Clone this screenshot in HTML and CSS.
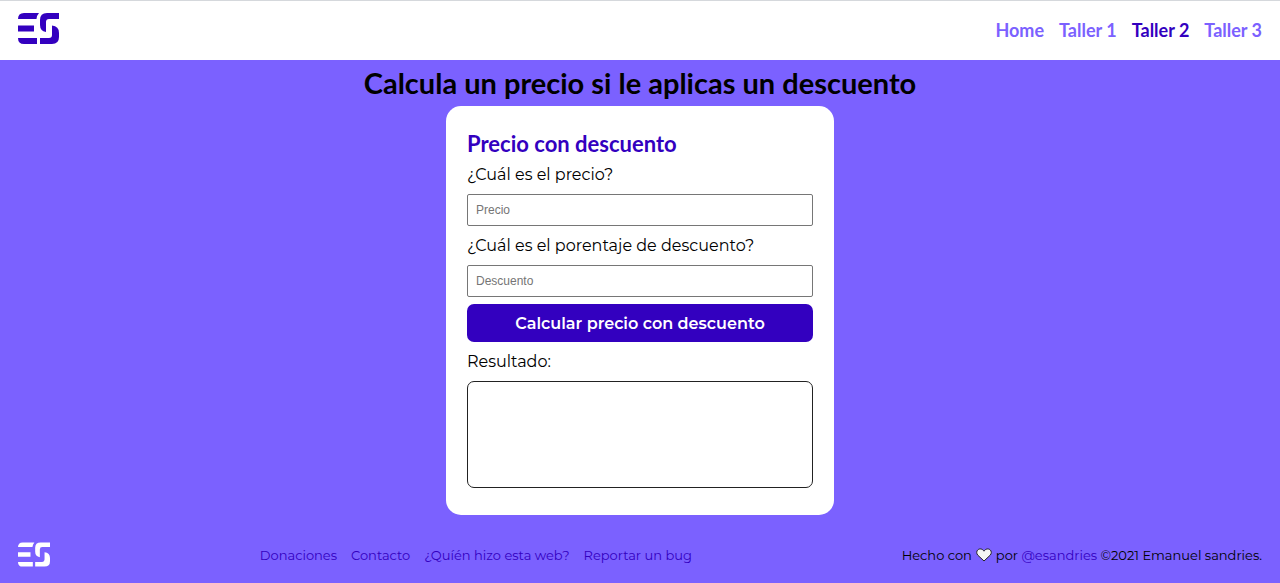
FILE: index.html
```
<!DOCTYPE html>
<html lang="es">
<head>
<meta charset="utf-8">
<meta name="viewport" content="width=device-width, initial-scale=1">
<title>Precio con descuento</title>
<link rel="stylesheet" href="styles.css">
</head>
<body>
<header class="header">
  <a class="logo-link" href="#" aria-label="Inicio">
    <svg class="logo" viewBox="0 0 41 31" aria-hidden="true">
      <path d="M6 0H21Q19 2 18.500 6H0Q0 0 6 0ZM0 12.500H16V18.500H0ZM0 25H19V31H6Q0 31 0 25ZM29 0H41V6H31Q28 6 28 9V19Q22 18 22 12V7Q22 0 29 0ZM34 12.500Q41 13 41 20V24Q41 31 34 31H22V25H31Q34 25 34 22Z"/>
    </svg>
  </a>
  <nav class="nav" aria-label="Principal">
    <a class="nav-link" href="#">Home</a>
    <a class="nav-link" href="#">Taller 1</a>
    <a class="nav-link nav-link-active" href="#" aria-current="page">Taller 2</a>
    <a class="nav-link" href="#">Taller 3</a>
  </nav>
</header>
<main class="main">
  <h1 class="title">Calcula un precio si le aplicas un descuento</h1>
  <form class="card">
    <h2 class="card-title">Precio con descuento</h2>
    <label class="label" for="price">¿Cuál es el precio?</label>
    <input class="input" id="price" type="text" inputmode="decimal" placeholder="Precio">
    <label class="label" for="discount">¿Cuál es el porentaje de descuento?</label>
    <input class="input" id="discount" type="text" inputmode="decimal" placeholder="Descuento">
    <button class="button" type="button">Calcular precio con descuento</button>
    <label class="label" for="result">Resultado:</label>
    <output class="result" id="result"></output>
  </form>
</main>
<footer class="footer">
  <a class="logo-link" href="#" aria-label="Inicio">
    <svg class="logo logo-small" viewBox="0 0 41 31" aria-hidden="true">
      <path d="M6 0H21Q19 2 18.500 6H0Q0 0 6 0ZM0 12.500H16V18.500H0ZM0 25H19V31H6Q0 31 0 25ZM29 0H41V6H31Q28 6 28 9V19Q22 18 22 12V7Q22 0 29 0ZM34 12.500Q41 13 41 20V24Q41 31 34 31H22V25H31Q34 25 34 22Z"/>
    </svg>
  </a>
  <nav class="footer-nav" aria-label="Enlaces">
    <a class="footer-link" href="#">Donaciones</a>
    <a class="footer-link" href="#">Contacto</a>
    <a class="footer-link" href="#">¿Quíén hizo esta web?</a>
    <a class="footer-link" href="#">Reportar un bug</a>
  </nav>
  <p class="credit">
    <span>Hecho con</span>
    <svg class="heart" viewBox="0 0 16 14" role="img" aria-label="amor"><path d="M8 13L1.800 7.200C.3 5.500 .4 3 1.900 1.800C3.700 .3 6.500 .7 8 3.200C9.500 .7 12.300 .3 14.100 1.800C15.600 3 15.700 5.500 14.200 7.200Z"/></svg>
    <span>por <a class="footer-link" href="#">@esandries</a> ©2021 Emanuel sandries.</span>
  </p>
</footer>
</body>
</html>
```
FILE: styles.css
```
:root {
  --violet: #7b61ff;
  --indigo: #3300bf;
  --body-font: Montserrat, Inter, "Open Sans", sans-serif;
  --title-font: Lato, sans-serif;
}

* {
  box-sizing: border-box;
}

body {
  display: flex;
  flex-direction: column;
  min-height: 100vh;
  margin: 0;
  background: var(--violet);
  color: #000;
  font-family: var(--body-font);
  font-size: 16px;
}

a {
  text-decoration: none;
}

.header {
  display: flex;
  align-items: flex-start;
  justify-content: space-between;
  padding: 12px 18px 13px;
  border-top: 1px solid #d5d8dc;
  background: #fff;
}

.logo-link {
  display: flex;
}

.logo {
  width: 41px;
  height: 31px;
  fill: var(--indigo);
}

.logo-small {
  width: 32px;
  height: 25px;
  fill: #fff;
}

.nav {
  display: flex;
  gap: 15px;
}

.nav-link {
  color: var(--violet);
  font-family: var(--title-font);
  font-size: 18px;
  font-weight: 700;
  line-height: 34px;
}

.nav-link-active {
  color: var(--indigo);
}

.main {
  display: flex;
  flex: 1;
  flex-direction: column;
  align-items: center;
  padding-top: 5px;
}

.title {
  margin: 0 0 5px;
  font-family: var(--title-font);
  font-size: 29px;
  font-weight: 700;
  line-height: 36px;
}

.card {
  display: flex;
  flex-direction: column;
  width: 100%;
  max-width: 388px;
  padding: 25px 21px 27px;
  border-radius: 15px;
  background: #fff;
}

.card-title {
  margin: 0 0 5px;
  color: var(--indigo);
  font-family: var(--title-font);
  font-size: 22px;
  font-weight: 700;
  line-height: 26px;
}

.label {
  margin-bottom: 6px;
  line-height: 26px;
}

.input {
  height: 32px;
  margin: 0 0 7px;
  padding: 0 8px;
  border: 1px solid #767676;
  border-radius: 2px;
  font-family: "Liberation Sans", Arial, sans-serif;
  font-size: 12px;
}

.input::placeholder {
  color: #757575;
}

.button {
  height: 38px;
  margin-bottom: 7px;
  border: 0;
  border-radius: 7px;
  background: var(--indigo);
  color: #fff;
  font-family: inherit;
  font-size: 16px;
  font-weight: 600;
}

.result {
  min-height: 107px;
  border: 1px solid #222;
  border-radius: 7px;
}

.footer {
  display: flex;
  align-items: center;
  justify-content: space-between;
  padding: 13px 18px 16px;
  font-size: 13px;
  line-height: 16px;
}

.footer-nav {
  display: flex;
  gap: 14px;
}

.footer-link {
  color: var(--indigo);
}

.credit {
  display: flex;
  align-items: center;
  gap: 4px;
  margin: 0;
}

.heart {
  width: 16px;
  height: 14px;
  fill: #f5f5f5;
  stroke: #222;
}
```
